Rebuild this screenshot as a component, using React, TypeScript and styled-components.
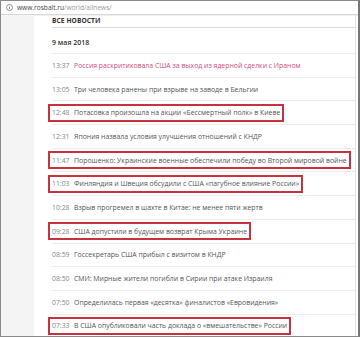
import styled, { createGlobalStyle } from "styled-components";

const GlobalStyle = createGlobalStyle`
  html, body {
    margin: 0;
    padding: 0;
    background: #ffffff;
  }
  * {
    box-sizing: border-box;
  }
`;

type NewsItem = {
  time: string;
  title: string;
  marked?: boolean;
  accent?: boolean;
};

const news: NewsItem[] = [
  { time: "13:37", title: "Россия раскритиковала США за выход из ядерной сделки с Ираном", accent: true },
  { time: "13:05", title: "Три человека ранены при взрыве на заводе в Бельгии" },
  { time: "12:48", title: "Потасовка произошла на акции «Бессмертный полк» в Киеве", marked: true },
  { time: "12:31", title: "Япония назвала условия улучшения отношений с КНДР" },
  { time: "11:47", title: "Порошенко: Украинские военные обеспечили победу во Второй мировой войне", marked: true },
  { time: "11:03", title: "Финляндия и Швеция обсудили с США «пагубное влияние России»", marked: true },
  { time: "10:28", title: "Взрыв прогремел в шахте в Китае: не менее пяти жертв" },
  { time: "09:28", title: "США допустили в будущем возврат Крыма Украине", marked: true },
  { time: "08:59", title: "Госсекретарь США прибыл с визитом в КНДР" },
  { time: "08:50", title: "СМИ: Мирные жители погибли в Сирии при атаке Израиля" },
  { time: "07:50", title: "Определилась первая «десятка» финалистов «Евровидения»" },
  { time: "07:33", title: "В США опубликовали часть доклада о «вмешательстве» России", marked: true },
];

const Frame = styled.div`
  width: 360px;
  height: 337px;
  overflow: hidden;
  border: 1px solid #8a8a8a;
  border-right: 2px solid #777;
  display: flex;
  flex-direction: column;
  font-family: "Open Sans", "Noto Sans", sans-serif;
`;

const UrlBar = styled.div`
  height: 14px;
  flex: none;
  display: flex;
  align-items: center;
  gap: 4px;
  padding-left: 5px;
  border-bottom: 1px solid #d8d8d8;
  box-shadow: 0 1px 0 #f0f0f0;
  font-size: 6.6px;
  color: #444;
`;

const InfoIcon = styled.svg`
  width: 7px;
  height: 7px;
  flex: none;
`;

const UrlPath = styled.span`
  color: #9a9a9a;
`;

const Body = styled.div`
  flex: 1;
  display: flex;
  min-height: 0;
`;

const Sidebar = styled.div`
  width: 33px;
  flex: none;
  background: #f4f4f4;
`;

const Main = styled.div`
  flex: 1;
  padding-left: 18px;
  border-right: 1px solid #e2e2e2;
  margin-right: 2px;
`;

const SectionTitle = styled.div`
  height: 13px;
  padding-top: 1px;
  border-bottom: 1px solid #dcdcdc;
  font-size: 6.6px;
  font-weight: 700;
  color: #333;
  letter-spacing: 0.1px;
`;

const DateTitle = styled.div`
  height: 26px;
  padding-top: 10px;
  font-size: 7px;
  font-weight: 600;
  color: #333;
  border-bottom: 1px solid #ececec;
`;

const Row = styled.div`
  height: 23.7px;
  display: flex;
  align-items: center;
  border-bottom: 1px solid #ececec;
`;

const Entry = styled.span<{ $marked?: boolean }>`
  display: inline-flex;
  align-items: center;
  gap: 4.5px;
  height: 18px;
  white-space: nowrap;
  font-size: 6.88px;
  padding: 0 ${(p) => (p.$marked ? "2px" : "0")};
  margin-left: ${(p) => (p.$marked ? "-4px" : "0")};
  border: ${(p) => (p.$marked ? "2px solid #c8323f" : "none")};
`;

const Time = styled.span`
  color: #888;
`;

const Headline = styled.span<{ $accent?: boolean }>`
  color: ${(p) => (p.$accent ? "#d44a80" : "#555")};
`;

const App = () => {
  return (
    <>
      <GlobalStyle />
      <Frame>
        <UrlBar>
          <InfoIcon viewBox="0 0 14 14">
            <circle cx="7" cy="7" r="6" fill="none" stroke="#666" strokeWidth="1.4" />
            <rect x="6.3" y="6" width="1.4" height="4.2" fill="#666" />
            <rect x="6.3" y="3.6" width="1.4" height="1.4" fill="#666" />
          </InfoIcon>
          <span>
            www.rosbalt.ru<UrlPath>/world/allnews/</UrlPath>
          </span>
        </UrlBar>
        <Body>
          <Sidebar />
          <Main>
            <SectionTitle>ВСЕ НОВОСТИ</SectionTitle>
            <DateTitle>9 мая 2018</DateTitle>
            {news.map((n) => (
              <Row key={n.time}>
                <Entry $marked={n.marked}>
                  <Time>{n.time}</Time>
                  <Headline $accent={n.accent}>{n.title}</Headline>
                </Entry>
              </Row>
            ))}
          </Main>
        </Body>
      </Frame>
    </>
  );
};

export default App;
